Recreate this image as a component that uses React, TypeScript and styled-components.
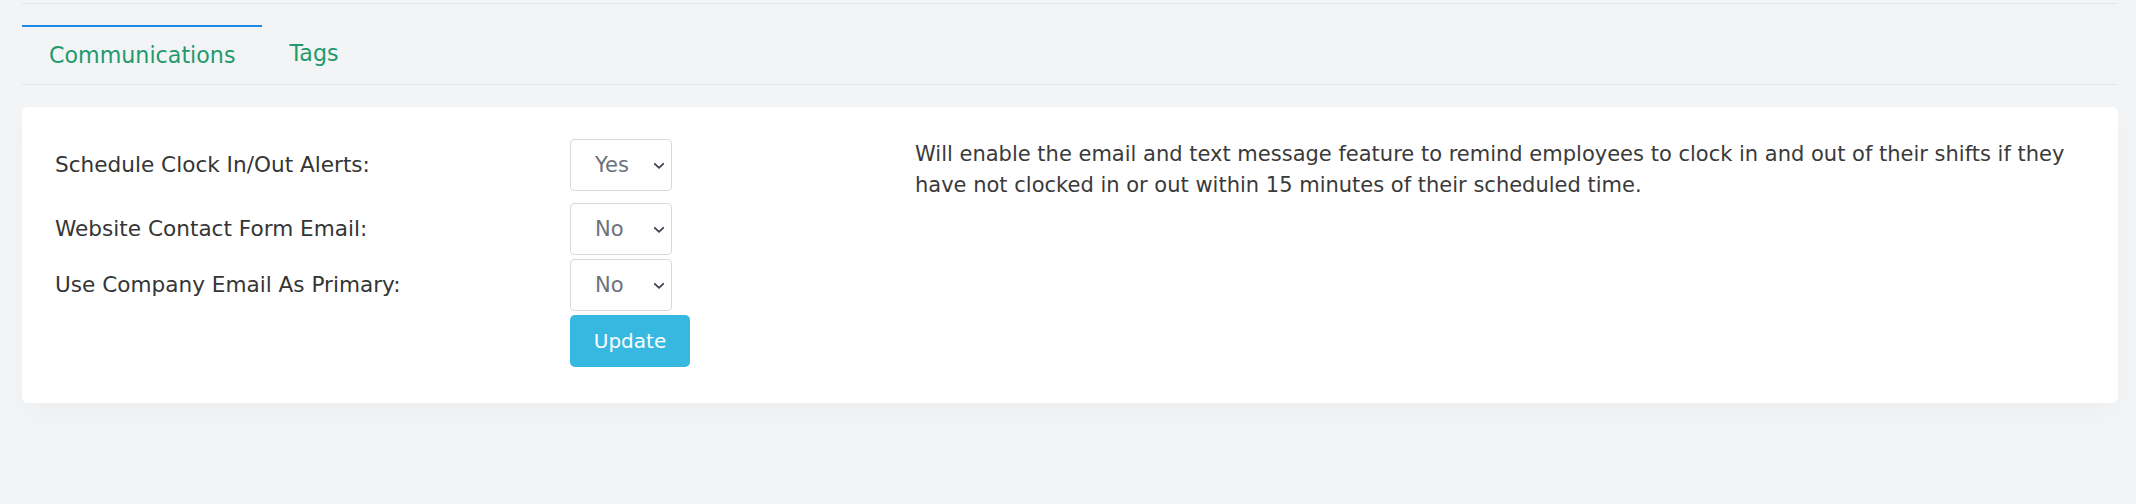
import React from "react";
import styled, { createGlobalStyle } from "styled-components";

const GlobalStyle = createGlobalStyle`
  html, body {
    margin: 0;
    padding: 0;
    background: #f3f4f6;
  }
  body {
    font-family: "DejaVu Sans", "Liberation Sans", sans-serif;
    color: #353535;
  }
  * { box-sizing: border-box; }
`;

const Page = styled.div`
  min-height: 504px;
  padding: 3px 18px 0 22px;
`;

const TabBar = styled.div`
  display: flex;
  align-items: stretch;
  border-top: 1px solid #e4e6ea;
  border-bottom: 1px solid #e4e6ea;
  padding-top: 21px;
`;

const Tab = styled.button<{ $active?: boolean }>`
  appearance: none;
  background: transparent;
  border: none;
  border-top: ${(p) => (p.$active ? "2px solid #1e88e5" : "none")};
  padding: 13px 27px 14px;
  font-family: inherit;
  font-size: 22.2px;
  line-height: 30px;
  color: #1f9a6c;
  cursor: pointer;
  align-self: flex-start;
`;

const Card = styled.section`
  margin-top: 22px;
  background: #ffffff;
  border-radius: 6px;
  box-shadow: 0 12px 28px rgba(20, 30, 60, 0.025);
  padding: 32px 33px 36px;
  display: grid;
  grid-template-columns: 860px 1fr;
`;

const Form = styled.div`
  display: flex;
  flex-direction: column;
`;

const Row = styled.div<{ $space: number }>`
  display: grid;
  grid-template-columns: 515px auto;
  align-items: center;
  margin-bottom: ${(p) => p.$space}px;
`;

const Label = styled.label`
  font-size: 21.6px;
  line-height: 30px;
  color: #353535;
`;

const SelectWrap = styled.div`
  position: relative;
  width: 102px;
  height: 52px;
`;

const Select = styled.select`
  appearance: none;
  -webkit-appearance: none;
  width: 100%;
  height: 100%;
  border: 1px solid #d6d9de;
  border-radius: 4px;
  background: #ffffff;
  padding: 0 0 0 24px;
  font-family: inherit;
  font-size: 21px;
  color: #6b727c;
  outline: none;
`;

const Chevron = styled.svg`
  position: absolute;
  right: 7px;
  top: 50%;
  width: 12px;
  height: 8px;
  margin-top: -3px;
  pointer-events: none;
`;

const ButtonRow = styled.div`
  display: grid;
  grid-template-columns: 515px auto;
`;

const UpdateButton = styled.button`
  grid-column: 2;
  width: 120px;
  height: 52px;
  border: none;
  border-radius: 5px;
  background: #36b8e0;
  color: #ffffff;
  font-family: inherit;
  font-size: 20px;
  cursor: pointer;
`;

const Description = styled.p`
  margin: 0;
  max-width: 1170px;
  font-size: 21px;
  line-height: 30.5px;
  color: #3a3a3a;
`;

type Setting = { label: string; value: string; space: number };

const settings: Setting[] = [
  { label: "Schedule Clock In/Out Alerts:", value: "Yes", space: 12 },
  { label: "Website Contact Form Email:", value: "No", space: 4 },
  { label: "Use Company Email As Primary:", value: "No", space: 4 },
];

function YesNo({ value }: { value: string }) {
  return (
    <SelectWrap>
      <Select defaultValue={value}>
        <option value="Yes">Yes</option>
        <option value="No">No</option>
      </Select>
      <Chevron viewBox="0 0 12 8" fill="none">
        <path d="M1.8 1.8 L6 5.8 L10.2 1.8" stroke="#3f4550" strokeWidth="1.8" strokeLinecap="round" strokeLinejoin="round" />
      </Chevron>
    </SelectWrap>
  );
}

export default function App() {
  return (
    <>
      <GlobalStyle />
      <Page>
        <TabBar>
          <Tab $active>Communications</Tab>
          <Tab>Tags</Tab>
        </TabBar>
        <Card>
          <Form>
            {settings.map((s) => (
              <Row key={s.label} $space={s.space}>
                <Label>{s.label}</Label>
                <YesNo value={s.value} />
              </Row>
            ))}
            <ButtonRow>
              <UpdateButton>Update</UpdateButton>
            </ButtonRow>
          </Form>
          <Description>
            Will enable the email and text message feature to remind employees to clock in and out of their shifts if they have not clocked in or out within 15 minutes of their scheduled time.
          </Description>
        </Card>
      </Page>
    </>
  );
}
